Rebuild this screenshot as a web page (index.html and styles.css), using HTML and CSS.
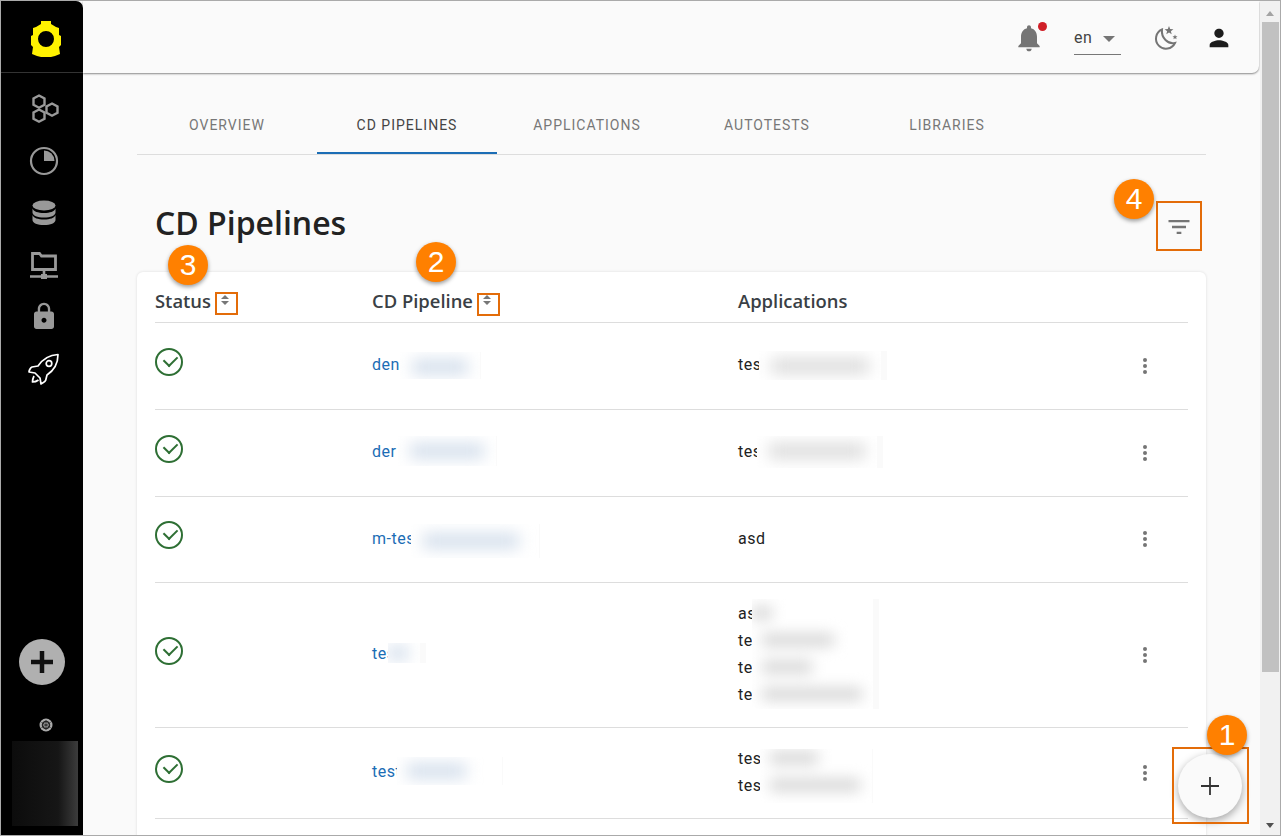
FILE: index.html
```html
<!DOCTYPE html>
<html lang="en">

<head>
    <meta charset="utf-8" />
    <title>CD Pipelines</title>
    <link rel="stylesheet" href="styles.css">
</head>

<body>
<div class="window">

    <aside class="sidebar">
        <div class="logo">
            <svg width="30" height="36" viewBox="0 0 30 36">
                <path fill-rule="evenodd" fill="#fff200" d="M10 0h10v3l5 3 3 1v7l2 1v9l-2 2 1 7-5 2-4 1H10l-4-1-5-2 1-7-2-2v-9l2-1V7l3-1 5-3zM15 10a8 8 0 1 0 0 16 8 8 0 0 0 0-16z"/>
            </svg>
        </div>
        <nav class="nav">
            <a class="nav-item">
                <svg width="30" height="30" viewBox="0 0 30 30" fill="none" stroke="#999" stroke-width="2.400">
                    <path d="M10 1.500l5.500 3v6.200l-5.500 3-5.500-3V4.500z"/>
                    <path d="M23 9.500l5.500 3v6.200l-5.500 3-5.500-3v-6.200z"/>
                    <path d="M10 15.500l5.500 3v6.200l-5.500 3-5.500-3v-6.200z"/>
                </svg>
            </a>
            <a class="nav-item">
                <svg width="30" height="30" viewBox="0 0 30 30">
                    <circle cx="15" cy="15" r="13" fill="none" stroke="#999" stroke-width="2.200"/>
                    <path fill="#999" d="M15 4.500a10.500 10.500 0 0 1 10.500 10.500H15z"/>
                </svg>
            </a>
            <a class="nav-item">
                <svg width="26" height="26" viewBox="0 0 26 26" fill="#999">
                    <ellipse cx="13" cy="5.500" rx="11.500" ry="5"/>
                    <path d="M1.500 8.500c1 3 5.500 4.500 11.500 4.500s10.500-1.500 11.500-4.500v4c0 3-5 5-11.500 5s-11.500-2-11.500-5z"/>
                    <path d="M1.500 15c1 3 5.500 4.500 11.500 4.500s10.500-1.500 11.500-4.500v5c0 3-5 5-11.500 5s-11.500-2-11.500-5z"/>
                </svg>
            </a>
            <a class="nav-item">
                <svg width="30" height="30" viewBox="0 0 30 30">
                    <path fill="none" stroke="#999" stroke-width="2.800" d="M3.500 3.500h7l2 2.500h14V19.500h-23z"/>
                    <path stroke="#999" stroke-width="2.600" d="M15 20v6M1 26.500h28"/>
                    <rect x="12" y="24" width="6" height="5" fill="#999"/>
                </svg>
            </a>
            <a class="nav-item">
                <svg width="30" height="34" viewBox="0 0 24 27" fill="#999">
                    <path transform="translate(0 1)" d="M18 8h-1V6c0-2.760-2.240-5-5-5S7 3.240 7 6v2H6c-1.100 0-2 .9-2 2v10c0 1.100.9 2 2 2h12c1.100 0 2-.9 2-2V10c0-1.100-.9-2-2-2zm-6 9c-1.100 0-2-.9-2-2s.9-2 2-2 2 .9 2 2-.9 2-2 2zm3.100-9H8.900V6c0-1.710 1.390-3.100 3.100-3.100 1.710 0 3.100 1.390 3.100 3.100v2z"/>
                </svg>
            </a>
            <a class="nav-item">
                <svg width="32" height="32" viewBox="0 0 32 32" fill="none" stroke="#fff" stroke-width="1.700" stroke-linejoin="round">
                    <path d="M30 1.500C21 2 14 7 10 13l-6 1c-2 1-3 4-3 5l6 1 5 5 1 6c2-1 5-3 5-5l1-4c6-4 11-11 11-20.500z"/>
                    <circle cx="21" cy="10.500" r="2.800"/>
                    <path d="M6 23c-1 2-1.500 4-1.500 6 2 0 4-.5 6-2"/>
                </svg>
            </a>
        </nav>
        <div class="add-round">
            <svg width="28" height="28" viewBox="0 0 28 28"><path d="M14 3v22M3 14h22" stroke="#111" stroke-width="4.500"/></svg>
        </div>
        <div class="cluster">
            <svg width="14" height="14" viewBox="0 0 14 14">
                <circle cx="7" cy="7" r="6.500" fill="#aaa"/>
                <circle cx="7" cy="7" r="3.500" fill="none" stroke="#222" stroke-width="1.500"/>
                <path d="M7 2v10M2.500 4.500l9 5M11.500 4.500l-9 5" stroke="#222" stroke-width=".8"/>
            </svg>
        </div>
        <div class="cluster-name"></div>
    </aside>

    <div class="main">
        <header class="topbar">
            <button class="icon-btn bell">
                <svg width="32" height="32" viewBox="0 0 24 24" fill="#757575"><path d="M12 22c1.100 0 2-.9 2-2h-4c0 1.100.89 2 2 2zm6-6v-5c0-3.070-1.640-5.640-4.500-6.320V4c0-.83-.67-1.500-1.500-1.500s-1.500.67-1.500 1.500v.68C7.630 5.360 6 7.920 6 11v5l-2 2v1h16v-1l-2-2z"/></svg>
                <span class="bell-dot"></span>
            </button>
            <div class="lang"><span>en</span><i class="caret"></i></div>
            <button class="icon-btn moon">
                <svg width="26" height="26" viewBox="0 0 26 26">
                    <path fill="none" stroke="#757575" stroke-width="2" d="M10 4.500a10 10 0 1 0 13 13.500c-7 1.500-14-5-13-13.500z"/>
                    <path fill="#757575" d="M17 1l1.200 3 3.200.2-2.500 2 .8 3.100-2.700-1.700-2.700 1.700.8-3.100-2.500-2 3.200-.2zM23 9.500l.7 1.700 1.800.1-1.400 1.200.5 1.800-1.600-1-1.600 1 .5-1.800-1.400-1.200 1.800-.1z"/>
                </svg>
            </button>
            <button class="icon-btn user">
                <svg width="28" height="28" viewBox="0 0 24 24" fill="#1c1c1c"><path d="M12 12c2.210 0 4-1.790 4-4s-1.790-4-4-4-4 1.790-4 4 1.790 4 4 4zm0 2c-2.670 0-8 1.340-8 4v2h16v-2c0-2.660-5.330-4-8-4z"/></svg>
            </button>
        </header>

        <div class="content">
            <div class="tabs">
                <a class="tab">Overview</a>
                <a class="tab active">CD Pipelines</a>
                <a class="tab">Applications</a>
                <a class="tab">Autotests</a>
                <a class="tab">Libraries</a>
            </div>

            <div class="title-row">
                <h1>CD Pipelines</h1>
                <button class="filter-btn">
                    <svg width="28" height="28" viewBox="0 0 24 24" fill="#757575"><path d="M10 18h4v-2h-4v2zM3 6v2h18V6H3zm3 7h12v-2H6v2z"/></svg>
                </button>
            </div>

            <div class="card">
                <table class="grid">
                    <colgroup>
                        <col class="col-status"><col class="col-name"><col class="col-apps"><col class="col-menu">
                    </colgroup>
                    <thead>
                        <tr>
                            <th>Status<span class="sort"></span></th>
                            <th>CD Pipeline<span class="sort"></span></th>
                            <th>Applications</th>
                            <th></th>
                        </tr>
                    </thead>
                    <tbody>
                        <tr class="row-a">
                            <td><span class="ok"></span></td>
                            <td><a class="link redacted n1">den<b></b></a></td>
                            <td><span class="app redacted a1">tes<b></b></span></td>
                            <td><span class="dots"></span></td>
                        </tr>
                        <tr class="row-a">
                            <td><span class="ok"></span></td>
                            <td><a class="link redacted n2">der<b></b></a></td>
                            <td><span class="app redacted a2">tes<b></b></span></td>
                            <td><span class="dots"></span></td>
                        </tr>
                        <tr class="row-b">
                            <td><span class="ok"></span></td>
                            <td><a class="link redacted n3">m-tes<b></b></a></td>
                            <td><span class="app">asd</span></td>
                            <td><span class="dots"></span></td>
                        </tr>
                        <tr>
                            <td><span class="ok"></span></td>
                            <td><a class="link redacted n4">tes<b></b></a></td>
                            <td>
                                <div class="redacted a4">
                                    <span class="app">asd</span>
                                    <span class="app">test</span>
                                    <span class="app">test</span>
                                    <span class="app">test</span>
                                    <b></b>
                                </div>
                            </td>
                            <td><span class="dots"></span></td>
                        </tr>
                        <tr>
                            <td><span class="ok"></span></td>
                            <td><a class="link redacted n5">test<b></b></a></td>
                            <td>
                                <div class="redacted a5">
                                    <span class="app">test</span>
                                    <span class="app">test</span>
                                    <b></b>
                                </div>
                            </td>
                            <td><span class="dots"></span></td>
                        </tr>
                    </tbody>
                </table>
            </div>
        </div>
    </div>

    <div class="scrollbar">
        <i class="arrow-up"></i>
        <div class="thumb"></div>
        <i class="arrow-down"></i>
    </div>

    <button class="fab">
        <svg width="24" height="24" viewBox="0 0 24 24"><path d="M12 3v18M3 12h18" stroke="#333" stroke-width="1.800"/></svg>
    </button>

    <!-- callouts drawn over the screenshot -->
    <span class="mark mark-status"></span>
    <span class="mark mark-name"></span>
    <span class="mark mark-filter"></span>
    <span class="mark mark-fab"></span>
    <span class="badge badge-1">1</span>
    <span class="badge badge-2">2</span>
    <span class="badge badge-3">3</span>
    <span class="badge badge-4">4</span>
</div>
</body>
</html>
```

FILE: styles.css
```css
* {
    box-sizing: border-box;
}

body {
    margin: 0;
    font-family: Roboto, Arial, sans-serif;
    color: #222;
    background: #fff;
}

.window {
    position: relative;
    display: flex;
    height: 836px;
    overflow: hidden;
    background: #fafafa;
    border: 1px solid #aaa;
}

/* sidebar */
.sidebar {
    display: flex;
    flex-direction: column;
    align-items: center;
    flex: none;
    width: 82px;
    background: #000;
    border-top-right-radius: 7px;
}

.logo {
    display: flex;
    align-items: center;
    justify-content: center;
    width: 100%;
    height: 72px;
    padding: 5px 0 0 8px;
    flex: none;
    border-bottom: 1px solid #333;
}

.nav {
    display: flex;
    flex-direction: column;
    margin-top: 10px;
}

.nav-item {
    display: flex;
    align-items: center;
    justify-content: center;
    width: 82px;
    height: 52px;
    padding-left: 4px;
}

.add-round {
    display: flex;
    align-items: center;
    justify-content: center;
    width: 46px;
    height: 46px;
    margin-top: auto;
    background: #b0b0b0;
    border-radius: 50%;
}

.cluster {
    display: flex;
    margin: 33px 0 0 7px;
}

.cluster-name {
    width: 66px;
    height: 85px;
    margin: 9px 0 9px 6px;
    background: linear-gradient(90deg, #0c0c0c 0, #161616 70%, #3c3c3c 100%);
}

/* top bar */
.main {
    display: flex;
    flex-direction: column;
    flex: 1;
    min-width: 0;
}

.topbar {
    display: flex;
    align-items: center;
    flex: none;
    height: 72px;
    margin-right: 1px;
    padding: 2px 26px 0 0;
    justify-content: flex-end;
    background: #fafafa;
    border-bottom-right-radius: 7px;
    box-shadow: 0 1px 2px rgba(0, 0, 0, .45);
}

.icon-btn {
    position: relative;
    display: flex;
    padding: 0;
    background: none;
    border: 0;
}

.bell-dot {
    position: absolute;
    top: 0;
    right: -2px;
    width: 9px;
    height: 9px;
    background: #d01f27;
    border-radius: 50%;
}

.lang {
    display: flex;
    align-items: center;
    width: 47px;
    height: 34px;
    margin: 0 31px 0 29px;
    font-size: 16px;
    letter-spacing: .6px;
    color: #444;
    border-bottom: 1px solid #777;
}

.caret {
    width: 0;
    height: 0;
    margin-left: 10px;
    margin-top: 2px;
    border: 6px solid transparent;
    border-top-color: #757575;
    border-bottom: 0;
}

.moon {
    margin-right: 27px;
}

/* page */
.content {
    flex: 1;
    min-height: 0;
    padding: 21px 54px 0;
}

.tabs {
    display: flex;
    height: 61px;
    border-bottom: 1px solid #ddd;
}

.tab {
    display: flex;
    align-items: center;
    justify-content: center;
    width: 180px;
    padding-top: 2px;
    font-size: 14px;
    letter-spacing: 1px;
    text-transform: uppercase;
    color: #777;
}

.tab.active {
    color: #444;
    box-shadow: inset 0 -2px 0 #1b6db5;
}

.title-row {
    display: flex;
    align-items: center;
    justify-content: space-between;
    height: 117px;
    padding: 26px 4px 0 18px;
}

h1 {
    margin: -8px 0 0;
    font-family: "Open Sans", sans-serif;
    font-size: 32px;
    font-weight: 600;
    color: #222;
}

.filter-btn {
    display: flex;
    align-items: center;
    justify-content: center;
    width: 46px;
    height: 50px;
    padding: 0;
    background: none;
    border: 0;
}

.card {
    height: 600px;
    padding: 0 18px;
    background: #fff;
    border-radius: 6px;
    box-shadow: 0 0 3px rgba(0, 0, 0, .12);
}

.grid {
    width: 100%;
    table-layout: fixed;
    border-collapse: collapse;
}

.col-status { width: 217px; }
.col-name { width: 366px; }
.col-menu { width: 90px; }

.grid th {
    height: 50px;
    padding: 8px 0 0;
    text-align: left;
    font-family: "Open Sans", sans-serif;
    font-size: 18.400px;
    font-weight: 600;
    color: #3a3f45;
    border-bottom: 1px solid #ddd;
}

.grid td {
    padding: 17px 0 19px;
    border-bottom: 1px solid #ddd;
    font-size: 16px;
    line-height: 27px;
}

.row-a td {
    height: 87px;
}

.row-b td {
    height: 86px;
}

.sort {
    position: relative;
    display: inline-block;
    width: 22px;
    height: 22px;
    margin-left: 3px;
    vertical-align: -4px;
}

.sort::before,
.sort::after {
    content: "";
    position: absolute;
    left: 7px;
    width: 0;
    height: 0;
    border-left: 4px solid transparent;
    border-right: 4px solid transparent;
}

.sort::before {
    top: 5px;
    border-bottom: 4px solid #777;
}

.sort::after {
    top: 11px;
    border-top: 4px solid #777;
}

.ok {
    position: relative;
    display: block;
    top: -3px;
    width: 28px;
    height: 28px;
    border: 2px solid #2e6f34;
    border-radius: 50%;
}

.ok::after {
    content: "";
    position: absolute;
    left: 7px;
    top: 5px;
    width: 11px;
    height: 7px;
    border-left: 2.500px solid #2e6f34;
    border-bottom: 2.500px solid #2e6f34;
    transform: rotate(-45deg);
}

.link {
    color: #1b6db5;
    letter-spacing: .5px;
}

.app {
    display: block;
    color: #222;
    letter-spacing: .5px;
}

.dots {
    display: block;
    position: relative;
    top: 1px;
    width: 4px;
    height: 4px;
    margin-left: 45px;
    background: #757575;
    border-radius: 50%;
    box-shadow: 0 -6px 0 #757575, 0 6px 0 #757575;
}

/* blurred out names */
.redacted {
    position: relative;
    display: inline-block;
}

.redacted b {
    position: absolute;
    display: block;
    margin-top: 1px;
    overflow: hidden;
    background: #fff;
    border-right: 6px solid #fafafa;
}

.redacted b::before {
    content: "";
    display: block;
    height: 14px;
    margin: 8px 12px 0;
    background: #d8d8d8;
    filter: blur(8px);
}

.link.redacted b::before {
    background: #d0dcea;
}

.n1 b { left: 28px; top: 0; width: 81px; height: 27px; border-right-width: 1px; }
.n2 b { left: 26px; top: -3px; width: 99px; height: 30px; border-right-width: 1px; }
.n3 b { left: 39px; top: -2px; width: 129px; height: 34px; border-right-width: 1px; }
.n3 b::before { margin: 10px 20px 0 12px; }
.n4 b { left: 16px; top: 2px; width: 38px; height: 20px; }
.n4 b::before { margin: 3px 12px 0 0; }
.n5 b { left: 25px; top: -2px; width: 106px; height: 28px; border-right-width: 1px; }
.n5 b::before { margin: 7px 36px 0 10px; }
.a1 b { left: 21px; top: -1px; width: 128px; height: 29px; }
.a2 b { left: 19px; top: -3px; width: 126px; height: 32px; }

.a4 { width: 141px; }
.a4 b { left: 14px; top: -2px; width: 127px; height: 110px; }
.a4 b::before {
    height: 110px;
    margin: 0;
    filter: blur(7px);
    background:
        linear-gradient(#dadada, #dadada) 0 7px / 20px 14px no-repeat,
        linear-gradient(#dadada, #dadada) 10px 34px / 72px 14px no-repeat,
        linear-gradient(#dadada, #dadada) 10px 61px / 50px 14px no-repeat,
        linear-gradient(#dadada, #dadada) 10px 88px / 100px 14px no-repeat;
}

.a5 { width: 135px; }
.a5 b { left: 22px; top: 3px; width: 113px; height: 54px; border-right-width: 1px; }
.a5 b::before {
    height: 54px;
    margin: 0;
    filter: blur(7px);
    background:
        linear-gradient(#dadada, #dadada) 10px 2px / 48px 14px no-repeat,
        linear-gradient(#dadada, #dadada) 10px 29px / 90px 14px no-repeat;
}

/* scrollbar */
.scrollbar {
    display: flex;
    flex-direction: column;
    flex: none;
    width: 20px;
    background: #f1f1f1;
}

.thumb {
    width: 17px;
    height: 650px;
    margin: 6px 0 0 2px;
    background: #c1c1c1;
}

.arrow-up,
.arrow-down {
    flex: none;
    width: 0;
    height: 0;
    margin-left: 6px;
    border-left: 4.500px solid transparent;
    border-right: 4.500px solid transparent;
}

.arrow-up {
    margin-top: 10px;
    border-bottom: 5px solid #a3a3a3;
}

.arrow-down {
    margin-top: auto;
    margin-bottom: 7px;
    border-top: 5px solid #505050;
}

/* floating things */
.fab {
    position: absolute;
    left: 1177px;
    top: 753px;
    display: flex;
    align-items: center;
    justify-content: center;
    width: 64px;
    height: 64px;
    padding: 0;
    background: #fafafa;
    border: 0;
    border-radius: 50%;
    box-shadow: 0 3px 9px rgba(0, 0, 0, .35);
}

.mark {
    position: absolute;
    border: 2px solid #e36c09;
}

.mark-status { left: 214px; top: 291px; width: 23px; height: 23px; }
.mark-name { left: 476px; top: 292px; width: 23px; height: 23px; }
.mark-filter { left: 1155px; top: 200px; width: 46px; height: 50px; }
.mark-fab { left: 1171px; top: 746px; width: 77px; height: 77px; }

.badge {
    position: absolute;
    display: flex;
    align-items: center;
    justify-content: center;
    width: 40px;
    height: 40px;
    font-family: "Liberation Sans", Arial, sans-serif;
    font-size: 30px;
    color: #fff;
    background: #ff8000;
    border-radius: 50%;
    box-shadow: 0 2px 4px rgba(0, 0, 0, .4);
}

.badge-1 { left: 1206px; top: 714px; }
.badge-2 { left: 415px; top: 241px; }
.badge-3 { left: 167px; top: 244px; }
.badge-4 { left: 1113px; top: 178px; }
```
